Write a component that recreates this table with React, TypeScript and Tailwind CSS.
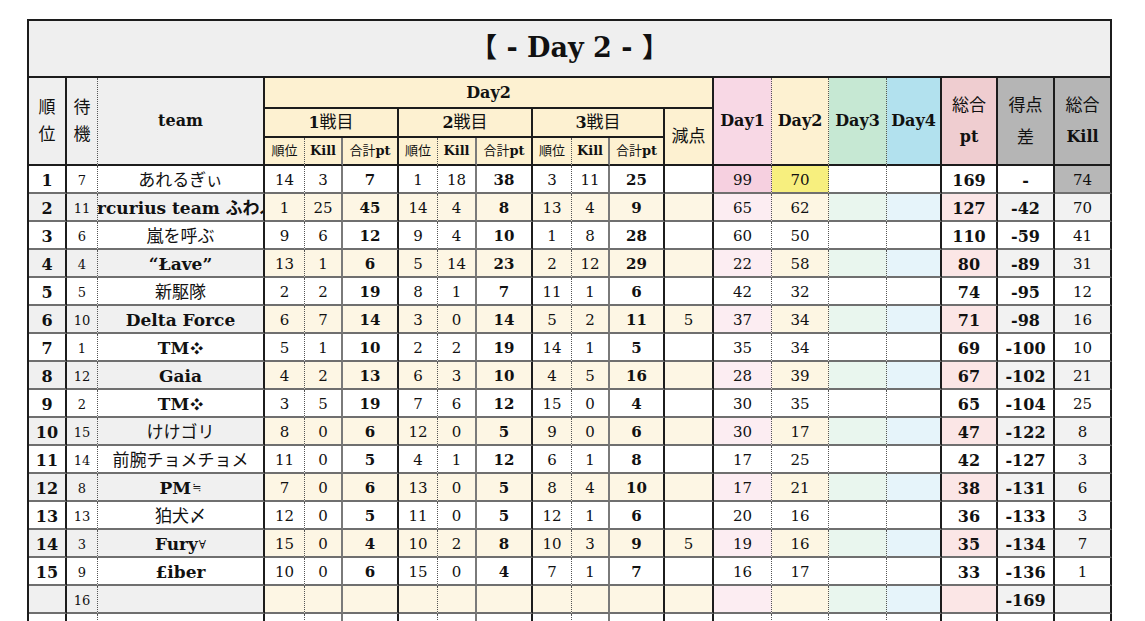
import React from "react"

const SOLID = "border-r-2 border-r-[#1c1c1c]"
const GRAY = "border-r-2 border-r-[#7a7a7a]"
const DOT = "[border-right:1px_dotted_#555]"

const cols = [
  { right: SOLID, even: "bg-[#f0f0f0]", font: "font-bold text-[16px]" },
  { right: DOT, even: "bg-[#f0f0f0]", font: "text-[13px]" },
  { right: SOLID, even: "bg-[#f0f0f0]", font: "" },
  { right: DOT, even: "bg-[#fdf6e4]", font: "text-[15px]" },
  { right: GRAY, even: "bg-[#fdf6e4]", font: "text-[15px]" },
  { right: SOLID, even: "bg-[#fdf6e4]", font: "font-bold text-[15px]" },
  { right: DOT, even: "bg-[#fdf6e4]", font: "text-[15px]" },
  { right: GRAY, even: "bg-[#fdf6e4]", font: "text-[15px]" },
  { right: SOLID, even: "bg-[#fdf6e4]", font: "font-bold text-[15px]" },
  { right: DOT, even: "bg-[#fdf6e4]", font: "text-[15px]" },
  { right: GRAY, even: "bg-[#fdf6e4]", font: "text-[15px]" },
  { right: SOLID, even: "bg-[#fdf6e4]", font: "font-bold text-[15px]" },
  { right: SOLID, even: "bg-[#fdf6e4]", font: "text-[15px]" },
  { right: DOT, even: "bg-[#fcedf2]", font: "text-[15px]" },
  { right: DOT, even: "bg-[#fdf6e3]", font: "text-[15px]" },
  { right: DOT, even: "bg-[#e9f6ee]", font: "text-[15px]" },
  { right: SOLID, even: "bg-[#e6f4fa]", font: "text-[15px]" },
  { right: SOLID, even: "bg-[#fbe6e6]", font: "font-bold text-[16px]" },
  { right: SOLID, even: "bg-[#f2f2f2]", font: "font-bold text-[16px]" },
  { right: SOLID, even: "bg-[#f2f2f2]", font: "text-[15px]" },
]

type Team = { name: string; sym?: string; symSize?: string; latin?: boolean }

const rows: [string, string, Team, ...string[]][] = [
  ["1", "7", { name: "あれるぎぃ" }, "14", "3", "7", "1", "18", "38", "3", "11", "25", "", "99", "70", "", "", "169", "-", "74"],
  ["2", "11", { name: "Mercurius team ふわふわ", latin: true }, "1", "25", "45", "14", "4", "8", "13", "4", "9", "", "65", "62", "", "", "127", "-42", "70"],
  ["3", "6", { name: "嵐を呼ぶ" }, "9", "6", "12", "9", "4", "10", "1", "8", "28", "", "60", "50", "", "", "110", "-59", "41"],
  ["4", "4", { name: "“Łave”", latin: true }, "13", "1", "6", "5", "14", "23", "2", "12", "29", "", "22", "58", "", "", "80", "-89", "31"],
  ["5", "5", { name: "新駆隊" }, "2", "2", "19", "8", "1", "7", "11", "1", "6", "", "42", "32", "", "", "74", "-95", "12"],
  ["6", "10", { name: "Delta Force", latin: true }, "6", "7", "14", "3", "0", "14", "5", "2", "11", "5", "37", "34", "", "", "71", "-98", "16"],
  ["7", "1", { name: "TM", sym: "❖", symSize: "text-[13px]", latin: true }, "5", "1", "10", "2", "2", "19", "14", "1", "5", "", "35", "34", "", "", "69", "-100", "10"],
  ["8", "12", { name: "Gaia", latin: true }, "4", "2", "13", "6", "3", "10", "4", "5", "16", "", "28", "39", "", "", "67", "-102", "21"],
  ["9", "2", { name: "TM", sym: "❖", symSize: "text-[13px]", latin: true }, "3", "5", "19", "7", "6", "12", "15", "0", "4", "", "30", "35", "", "", "65", "-104", "25"],
  ["10", "15", { name: "けけゴリ" }, "8", "0", "6", "12", "0", "5", "9", "0", "6", "", "30", "17", "", "", "47", "-122", "8"],
  ["11", "14", { name: "前腕チョメチョメ" }, "11", "0", "5", "4", "1", "12", "6", "1", "8", "", "17", "25", "", "", "42", "-127", "3"],
  ["12", "8", { name: "PM", sym: "≒", symSize: "text-[11px]", latin: true }, "7", "0", "6", "13", "0", "5", "8", "4", "10", "", "17", "21", "", "", "38", "-131", "6"],
  ["13", "13", { name: "狛犬〆" }, "12", "0", "5", "11", "0", "5", "12", "1", "6", "", "20", "16", "", "", "36", "-133", "3"],
  ["14", "3", { name: "Fury", sym: "∀", symSize: "text-[12px]", latin: true }, "15", "0", "4", "10", "2", "8", "10", "3", "9", "5", "19", "16", "", "", "35", "-134", "7"],
  ["15", "9", { name: "£iber", latin: true }, "10", "0", "6", "15", "0", "4", "7", "1", "7", "", "16", "17", "", "", "33", "-136", "1"],
  ["", "16", { name: "" }, "", "", "", "", "", "", "", "", "", "", "", "", "", "", "", "-169", ""],
  ["", "", { name: "" }, "", "", "", "", "", "", "", "", "", "", "", "", "", "", "", "", ""],
]

const firstRowBg: Record<number, string> = {
  13: "bg-[#f6d0e0]",
  14: "bg-[#f7ef7e]",
  19: "bg-[#b7b7b7]",
}

const headBase = "flex items-center justify-center text-center border-b-2 border-b-[#1c1c1c]"

export default function App() {
  return (
    <div className="min-h-screen bg-white pl-[27px] pt-[19px] text-[#111] font-['DejaVu_Serif','Noto_Sans_CJK_JP',serif]">
      <div className="grid w-max grid-cols-[38px_31px_167px_40px_38px_56px_39px_39px_56px_39px_38px_55px_49px_58px_57px_58px_55px_56px_57px_57px] grid-rows-[57px_31px_29px_28px] auto-rows-[28px] border-l-2 border-t-2 border-[#1c1c1c]">
        {/* title */}
        <div className={`col-span-20 bg-[#efefef] text-[27px] font-bold ${headBase} ${SOLID}`}>
          【 - Day 2 - 】
        </div>

        {/* header row 1 */}
        <div className={`row-span-3 bg-[#efefef] text-[17px] leading-[27px] ${headBase} ${SOLID}`}>
          順<br />位
        </div>
        <div className={`row-span-3 bg-[#efefef] text-[17px] leading-[27px] ${headBase} ${DOT}`}>
          待<br />機
        </div>
        <div className={`row-span-3 bg-[#efefef] text-[16px] font-bold ${headBase} ${SOLID}`}>team</div>
        <div className={`col-span-10 bg-[#fdf1d1] text-[16px] font-bold ${headBase} ${SOLID}`}>Day2</div>
        <div className={`row-span-3 bg-[#f8d8e5] text-[16px] font-bold ${headBase} ${DOT}`}>Day1</div>
        <div className={`row-span-3 bg-[#fdf1d1] text-[16px] font-bold ${headBase} ${DOT}`}>Day2</div>
        <div className={`row-span-3 bg-[#c6e8d3] text-[16px] font-bold ${headBase} ${DOT}`}>Day3</div>
        <div className={`row-span-3 bg-[#b2e1ee] text-[16px] font-bold ${headBase} ${SOLID}`}>Day4</div>
        <div className={`row-span-3 flex-col bg-[#efcdd0] text-[17px] leading-[32px] ${headBase} ${SOLID}`}>
          <span>総合</span>
          <span className="font-bold text-[16px]">pt</span>
        </div>
        <div className={`row-span-3 flex-col bg-[#b5b5b5] text-[17px] leading-[32px] ${headBase} ${SOLID}`}>
          <span>得点</span>
          <span>差</span>
        </div>
        <div className={`row-span-3 flex-col bg-[#b5b5b5] text-[17px] leading-[32px] ${headBase} ${SOLID}`}>
          <span>総合</span>
          <span className="font-bold text-[16px]">Kill</span>
        </div>

        {/* header row 2 */}
        {["1", "2", "3"].map((n) => (
          <div key={n} className={`col-span-3 bg-[#fdf1d1] text-[17px] ${headBase} ${SOLID}`}>
            <span className="font-bold text-[16px]">{n}</span>戦目
          </div>
        ))}
        <div className={`row-span-2 bg-[#fdf1d1] text-[17px] ${headBase} ${SOLID}`}>減点</div>

        {/* header row 3 */}
        {[0, 1, 2].map((n) => (
          <React.Fragment key={n}>
            <div className={`bg-[#fdf1d1] text-[13px] ${headBase} ${DOT}`}>順位</div>
            <div className={`bg-[#fdf1d1] text-[13px] font-bold ${headBase} ${GRAY}`}>Kill</div>
            <div className={`bg-[#fdf1d1] text-[13px] ${headBase} ${SOLID}`}>
              合計<span className="font-bold">pt</span>
            </div>
          </React.Fragment>
        ))}

        {/* data */}
        {rows.map((row, i) =>
          row.map((cell, c) => {
            const col = cols[c]
            let bg = i % 2 === 1 ? col.even : "bg-white"
            if (i === 0 && firstRowBg[c]) bg = firstRowBg[c]
            const base = `flex items-center justify-center overflow-hidden whitespace-nowrap pt-[3px] border-b-2 border-b-[#6f6f6f] ${col.right} ${bg}`
            if (c === 2) {
              const t = cell as Team
              return (
                <div key={c} className={`${base} ${t.latin ? "font-bold text-[17px]" : "text-[17px]"}`}>
                  {t.name}
                  {t.sym && <span className={`ml-[1px] font-normal ${t.symSize}`}>{t.sym}</span>}
                </div>
              )
            }
            return (
              <div key={c} className={`${base} ${col.font}`}>
                {cell as string}
              </div>
            )
          })
        )}
      </div>
    </div>
  )
}
